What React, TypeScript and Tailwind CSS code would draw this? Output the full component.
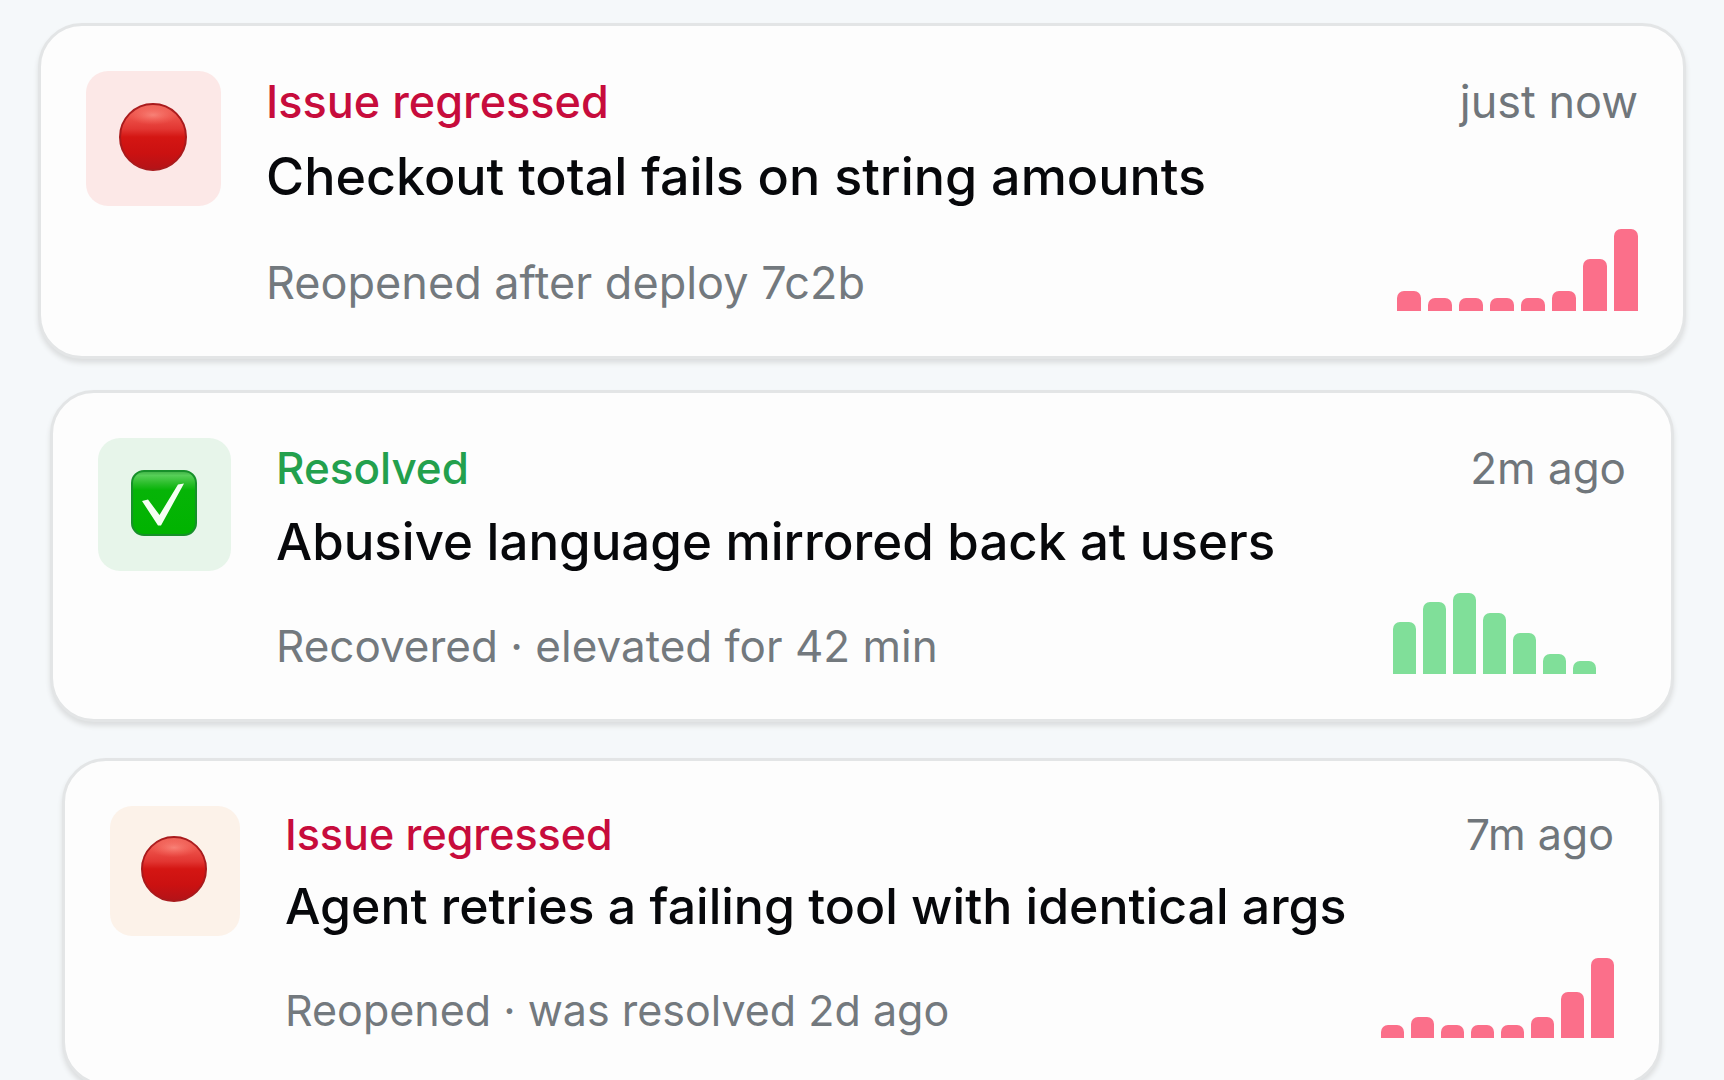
type Icon = "alert" | "check";

interface IssueCardProps {
  icon: Icon;
  status: string;
  title: string;
  detail: string;
  time: string;
  bars: number[];
  statusColor: string;
  tileColor: string;
  barColor: string;
  size: CardSize;
}

interface CardSize {
  card: string;
  tile: string;
  glyph: string;
  text: string;
  header: string;
  title: string;
  footer: string;
  bar: string;
}

// Cards further down the stack get slightly smaller
const large: CardSize = {
  card: "mx-[38px] h-[336px] gap-[45px] rounded-[44px] p-[45px]",
  tile: "size-[135px]",
  glyph: "size-[68px]",
  text: "text-[45px]",
  header: "leading-[62px]",
  title: "text-[52px] leading-[88px]",
  footer: "leading-[56px]",
  bar: "w-[24px]",
};

const medium: CardSize = {
  card: "mx-[50px] mt-[31px] h-[332px] gap-[45px] rounded-[44px] p-[45px]",
  tile: "size-[133px]",
  glyph: "size-[66px]",
  text: "text-[44px]",
  header: "leading-[60px]",
  title: "text-[51px] leading-[88px]",
  footer: "leading-[56px]",
  bar: "w-[23px]",
};

const small: CardSize = {
  card: "mx-[62px] mt-[36px] h-[328px] gap-[45px] rounded-[44px] p-[45px]",
  tile: "size-[130px]",
  glyph: "size-[66px]",
  text: "text-[43px]",
  header: "leading-[56px]",
  title: "text-[50px] leading-[88px]",
  footer: "leading-[56px]",
  bar: "w-[23px]",
};

const AlertIcon = ({ className }: { className: string }) => (
  <svg viewBox="0 0 68 68" className={className} aria-hidden="true">
    <defs>
      <linearGradient id="alert-fill" x1="0" y1="0" x2="0" y2="1">
        <stop offset="0" stopColor="#f0675c" />
        <stop offset="0.2" stopColor="#ec5048" />
        <stop offset="0.38" stopColor="#e23632" />
        <stop offset="0.5" stopColor="#d41613" />
        <stop offset="0.75" stopColor="#cb1111" />
        <stop offset="1" stopColor="#b31318" />
      </linearGradient>
      <radialGradient id="alert-shine">
        <stop offset="0" stopColor="#ffa094" stopOpacity="0.6" />
        <stop offset="1" stopColor="#ff7a70" stopOpacity="0" />
      </radialGradient>
    </defs>
    <circle cx="34" cy="34" r="33" fill="url(#alert-fill)" stroke="#a91a1c" strokeWidth="2" />
    <ellipse cx="34" cy="12" rx="25" ry="10" fill="url(#alert-shine)" />
  </svg>
);

const CheckIcon = ({ className }: { className: string }) => (
  <svg viewBox="0 0 66 66" className={className} aria-hidden="true">
    <defs>
      <linearGradient id="check-fill" x1="0" y1="0" x2="0" y2="1">
        <stop offset="0" stopColor="#3fae45" />
        <stop offset="0.07" stopColor="#56cf58" />
        <stop offset="0.2" stopColor="#28bd28" />
        <stop offset="0.3" stopColor="#06b407" />
        <stop offset="1" stopColor="#00b300" />
      </linearGradient>
    </defs>
    <rect x="1" y="1" width="64" height="64" rx="12" fill="url(#check-fill)" stroke="#17902a" strokeWidth="2" />
    <path d="M11 31 L17 29.5 L28.5 45 L47 14.5 L53 13.5 L30 55.5 L27 55.5 Z" fill="#f4fff2" />
  </svg>
);

const IssueCard: React.FC<IssueCardProps> = ({
  icon,
  status,
  title,
  detail,
  time,
  bars,
  statusColor,
  tileColor,
  barColor,
  size,
}) => {
  return (
    <li
      className={`flex items-start border-[3px] border-[#e3e5e6] bg-[#fdfdfd] shadow-[0_4px_5px_#dcdedf] ${size.card}`}
    >
      <div
        className={`flex flex-none items-center justify-center rounded-[22px] pb-1 pr-0.5 ${tileColor} ${size.tile}`}
      >
        {icon === "alert" ? (
          <AlertIcon className={size.glyph} />
        ) : (
          <CheckIcon className={size.glyph} />
        )}
      </div>

      <div className={`flex h-full min-w-0 flex-auto flex-col ${size.text}`}>
        <div className={`flex justify-between ${size.header}`}>
          <p className={`font-medium ${statusColor}`}>{status}</p>
          <time className="text-[#70767b]">{time}</time>
        </div>
        <h2 className={`whitespace-nowrap font-medium text-[#07080b] ${size.title}`}>
          {title}
        </h2>
        <div className={`flex min-h-0 flex-auto items-end justify-between ${size.footer}`}>
          <p className="text-[#73797e]">{detail}</p>
          <div className="flex items-end gap-[7px]">
            {bars.map((height, i) => (
              <div
                key={i}
                className={`rounded-t-[7px] ${barColor} ${size.bar}`}
                style={{ height }}
              />
            ))}
          </div>
        </div>
      </div>
    </li>
  );
};

const App = () => {
  return (
    <main className="h-screen overflow-hidden bg-[#f5f8fa] pt-[23px] font-['Inter','Liberation_Sans',sans-serif]">
      <ul>
        <IssueCard
          icon="alert"
          status="Issue regressed"
          title="Checkout total fails on string amounts"
          detail="Reopened after deploy 7c2b"
          time="just now"
          bars={[20, 13, 13, 13, 13, 20, 52, 82]}
          statusColor="text-[#c70c3c]"
          tileColor="bg-[#fce8e7]"
          barColor="bg-[#fb6f8a]"
          size={large}
        />
        <IssueCard
          icon="check"
          status="Resolved"
          title="Abusive language mirrored back at users"
          detail="Recovered · elevated for 42 min"
          time="2m ago"
          bars={[52, 72, 81, 61, 41, 20, 13, 0]}
          statusColor="text-[#23a04d]"
          tileColor="bg-[#e7f5ea]"
          barColor="bg-[#80df99]"
          size={medium}
        />
        <IssueCard
          icon="alert"
          status="Issue regressed"
          title="Agent retries a failing tool with identical args"
          detail="Reopened · was resolved 2d ago"
          time="7m ago"
          bars={[13, 21, 13, 13, 13, 21, 46, 80]}
          statusColor="text-[#c70c3c]"
          tileColor="bg-[#fcf2e9]"
          barColor="bg-[#fb6f8a]"
          size={small}
        />
      </ul>
    </main>
  );
};
export default App;
